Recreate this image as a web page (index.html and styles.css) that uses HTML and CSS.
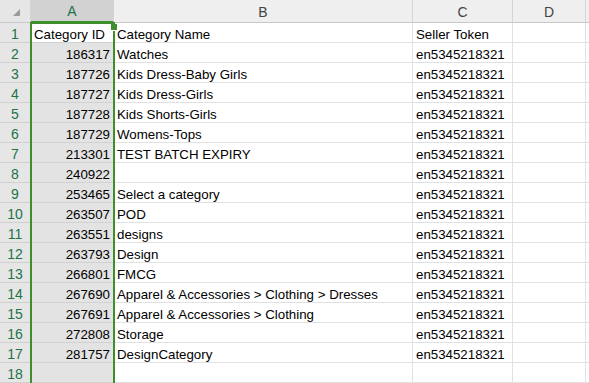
FILE: index.html
```html
<!DOCTYPE html>
<html>
<head>
<meta charset="utf-8">
<link rel="stylesheet" href="styles.css">
</head>
<body>
<div class="sheet">
  <div class="corner"><span class="tri"></span></div>
  <div class="ch sel">A</div>
  <div class="ch">B</div>
  <div class="ch">C</div>
  <div class="ch">D</div>
  <div class="ch last"></div>

  <div class="rh">1</div><div class="c a l">Category ID</div><div class="c">Category Name</div><div class="c">Seller Token</div><div class="c"></div><div class="c"></div>
  <div class="rh">2</div><div class="c a">186317</div><div class="c">Watches</div><div class="c">en5345218321</div><div class="c"></div><div class="c"></div>
  <div class="rh">3</div><div class="c a">187726</div><div class="c">Kids Dress-Baby Girls</div><div class="c">en5345218321</div><div class="c"></div><div class="c"></div>
  <div class="rh">4</div><div class="c a">187727</div><div class="c">Kids Dress-Girls</div><div class="c">en5345218321</div><div class="c"></div><div class="c"></div>
  <div class="rh">5</div><div class="c a">187728</div><div class="c">Kids Shorts-Girls</div><div class="c">en5345218321</div><div class="c"></div><div class="c"></div>
  <div class="rh">6</div><div class="c a">187729</div><div class="c">Womens-Tops</div><div class="c">en5345218321</div><div class="c"></div><div class="c"></div>
  <div class="rh">7</div><div class="c a">213301</div><div class="c">TEST BATCH EXPIRY</div><div class="c">en5345218321</div><div class="c"></div><div class="c"></div>
  <div class="rh">8</div><div class="c a">240922</div><div class="c"></div><div class="c">en5345218321</div><div class="c"></div><div class="c"></div>
  <div class="rh">9</div><div class="c a">253465</div><div class="c">Select a category</div><div class="c">en5345218321</div><div class="c"></div><div class="c"></div>
  <div class="rh">10</div><div class="c a">263507</div><div class="c">POD</div><div class="c">en5345218321</div><div class="c"></div><div class="c"></div>
  <div class="rh">11</div><div class="c a">263551</div><div class="c">designs</div><div class="c">en5345218321</div><div class="c"></div><div class="c"></div>
  <div class="rh">12</div><div class="c a">263793</div><div class="c">Design</div><div class="c">en5345218321</div><div class="c"></div><div class="c"></div>
  <div class="rh">13</div><div class="c a">266801</div><div class="c">FMCG</div><div class="c">en5345218321</div><div class="c"></div><div class="c"></div>
  <div class="rh">14</div><div class="c a">267690</div><div class="c">Apparel &amp; Accessories &gt; Clothing &gt; Dresses</div><div class="c">en5345218321</div><div class="c"></div><div class="c"></div>
  <div class="rh">15</div><div class="c a">267691</div><div class="c">Apparel &amp; Accessories &gt; Clothing</div><div class="c">en5345218321</div><div class="c"></div><div class="c"></div>
  <div class="rh">16</div><div class="c a">272808</div><div class="c">Storage</div><div class="c">en5345218321</div><div class="c"></div><div class="c"></div>
  <div class="rh">17</div><div class="c a">281757</div><div class="c">DesignCategory</div><div class="c">en5345218321</div><div class="c"></div><div class="c"></div>
  <div class="rh">18</div><div class="c a"></div><div class="c"></div><div class="c"></div><div class="c"></div><div class="c"></div>

  <div class="selection"><span class="handle"></span></div>
</div>
</body>
</html>
```
FILE: styles.css
```css
html, body {
  margin: 0;
  padding: 0;
  background: #ffffff;
  overflow: hidden;
}
.sheet {
  position: relative;
  display: grid;
  grid-template-columns: 31px 83px 299px 100px 73px 1fr;
  grid-template-rows: 23px;
  grid-auto-rows: 20px;
  width: 589px;
  height: 383px;
  overflow: hidden;
  font-family: "Liberation Sans", Arial, sans-serif;
  font-size: 13.3px;
  color: #000;
}
.corner {
  background: #e6e6e6;
  border-right: 1px solid #d4d4d4;
  border-bottom: 1px solid #c8c8c8;
  box-sizing: border-box;
  position: relative;
}
.tri {
  position: absolute;
  left: 13px;
  top: 9px;
  width: 0;
  height: 0;
  border-left: 7px solid transparent;
  border-bottom: 7px solid #9a9a9a;
}
.ch {
  background: #efefef;
  border-right: 1px solid #d4d4d4;
  border-bottom: 1px solid #c8c8c8;
  box-sizing: border-box;
  display: flex;
  align-items: center;
  justify-content: center;
  color: #444;
  font-size: 14px;
  padding-top: 1px;
}
.ch.sel {
  background: #d2d2d2;
  color: #217346;
  border-bottom: 2px solid #3e8e2b;
}
.ch.last {
  border-right: none;
}
.rh {
  background: #e6e6e6;
  border-right: 1px solid #c8c8c8;
  border-bottom: 1px solid #d0d0d0;
  box-sizing: border-box;
  display: flex;
  align-items: center;
  justify-content: center;
  color: #217346;
  font-size: 14px;
  padding-top: 2px;
}
.c {
  border-right: 1px solid #e1e1e1;
  border-bottom: 1px solid #e1e1e1;
  box-sizing: border-box;
  padding: 3px 3px 0 3px;
  line-height: 17px;
  white-space: nowrap;
  overflow: visible;
}
.c.a {
  background: #e3e3e3;
  text-align: right;
  border-bottom-color: #d2d2d2;
}
.c.a.l {
  background: #ffffff;
  text-align: left;
  padding-left: 3px;
}
.selection {
  position: absolute;
  left: 30px;
  top: 22px;
  width: 85px;
  height: 361px;
  border: 2px solid #3e8e2b;
  border-bottom: none;
  box-sizing: border-box;
  pointer-events: none;
}
.handle {
  position: absolute;
  right: -4px;
  top: 0px;
  width: 6px;
  height: 6px;
  background: #3e8e2b;
  border-left: 1px solid #fff;
  border-bottom: 1px solid #fff;
}
```
